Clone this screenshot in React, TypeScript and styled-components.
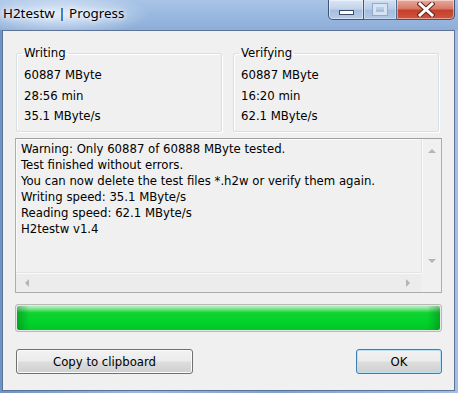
import styled, { createGlobalStyle } from 'styled-components';

const GlobalStyle = createGlobalStyle`
	html, body {
		margin: 0;
		padding: 0;
		background: #f0f0f0;
	}
	* {
		box-sizing: border-box;
	}
`;

const uiFont = `"DejaVu Sans Condensed", "DejaVu Sans", sans-serif`;

interface Stats {
	title: string;
	size: string;
	time: string;
	speed: string;
}

const stats: Stats[] = [
	{ title: 'Writing', size: '60887 MByte', time: '28:56 min', speed: '35.1 MByte/s' },
	{ title: 'Verifying', size: '60887 MByte', time: '16:20 min', speed: '62.1 MByte/s' },
];

const logLines = [
	'Warning: Only 60887 of 60888 MByte tested.',
	'Test finished without errors.',
	'You can now delete the test files *.h2w or verify them again.',
	'Writing speed: 35.1 MByte/s',
	'Reading speed: 62.1 MByte/s',
	'H2testw v1.4',
];

// small grey triangle used by the scroll bar buttons
const Arrow = ({ dir }: { dir: 'up' | 'down' | 'left' | 'right' }) => {
	const pts = {
		up: '0,5 4,1 8,5',
		down: '0,1 4,5 8,1',
		left: '5,0 1,4 5,8',
		right: '1,0 5,4 1,8',
	}[dir];
	const vertical = dir === 'up' || dir === 'down';
	return (
		<svg width={vertical ? 8 : 6} height={vertical ? 6 : 8} viewBox={vertical ? '0 0 8 6' : '0 0 6 8'}>
			<polygon points={pts} fill='#b4b4b4' />
		</svg>
	);
};

const App = () => {
	return (
		<>
			<GlobalStyle />
			<Window>
				<TitleBar>
					<Title>H2testw | Progress</Title>
					<Controls>
						<CaptionButton kind='min'>
							<MinGlyph />
						</CaptionButton>
						<CaptionButton kind='max'>
							<MaxGlyph />
						</CaptionButton>
						<CaptionButton kind='close'>
							<svg width='18' height='15' viewBox='0 0 18 15'>
								<path d='M3 2 L15 13 M15 2 L3 13' stroke='#6a2418' strokeWidth='5' strokeLinecap='square' />
								<path d='M3 2 L15 13 M15 2 L3 13' stroke='#ffffff' strokeWidth='3' strokeLinecap='square' />
							</svg>
						</CaptionButton>
					</Controls>
				</TitleBar>
				<Client>
					<GroupRow>
						{stats.map((s) => (
							<GroupBox key={s.title}>
								<Legend>{s.title}</Legend>
								<StatLine>{s.size}</StatLine>
								<StatLine>{s.time}</StatLine>
								<StatLine>{s.speed}</StatLine>
							</GroupBox>
						))}
					</GroupRow>
					<LogBox>
						<LogText>
							{logLines.map((l) => (
								<div key={l}>{l}</div>
							))}
						</LogText>
						<VScroll>
							<Arrow dir='up' />
							<Arrow dir='down' />
						</VScroll>
						<HScroll>
							<Arrow dir='left' />
							<Arrow dir='right' />
						</HScroll>
						<Corner />
					</LogBox>
					<Progress>
						<ProgressFill style={{ width: '100%' }} />
					</Progress>
					<ButtonRow>
						<Button width={177}>Copy to clipboard</Button>
						<Button width={86} isDefault>
							OK
						</Button>
					</ButtonRow>
				</Client>
			</Window>
		</>
	);
};

export default App;

const Window = styled.div`
	width: 458px;
	height: 393px;
	display: flex;
	flex-direction: column;
	padding: 0 3px 2px 2px;
	background: linear-gradient(90deg, #6f93c4 0%, #9ab8df 30%, #7fa1cf 60%, #a3bfe2 100%);
	overflow: hidden;
`;

const TitleBar = styled.div`
	height: 30px;
	display: flex;
	justify-content: space-between;
	align-items: flex-start;
	margin: 0 -3px 0 -2px;
	background:
		radial-gradient(ellipse 90px 22px at 60px 14px, rgba(230, 240, 252, 0.95), rgba(200, 220, 245, 0) 100%),
		linear-gradient(180deg, #a9c4e6 0%, #9ab8df 50%, #8eaed9 100%);
`;

const Title = styled.div`
	font-family: 'Noto Sans', 'Open Sans', sans-serif;
	font-size: 13.4px;
	line-height: 20px;
	color: #000;
	padding: 3px 0 0 3px;
	text-shadow: 0 0 8px #fff, 0 0 4px #fff;
`;

const Controls = styled.div`
	display: flex;
	margin-right: 3px;
`;

const CaptionButton = styled.div<{ kind: 'min' | 'max' | 'close' }>`
	height: 20px;
	width: ${(p) => (p.kind === 'close' ? 58 : p.kind === 'min' ? 36 : 33)}px;
	display: flex;
	align-items: center;
	justify-content: center;
	border: 1px solid #3e5579;
	border-top: none;
	border-left: ${(p) => (p.kind === 'min' ? '1px solid #3e5579' : 'none')};
	border-radius: ${(p) => (p.kind === 'min' ? '0 0 0 5px' : p.kind === 'close' ? '0 0 5px 0' : '0')};
	box-shadow: inset 0 0 0 1px rgba(255, 255, 255, 0.45);
	background: ${(p) =>
		p.kind === 'close'
			? 'linear-gradient(180deg, #e9a99c 0%, #d77a68 45%, #c4402b 55%, #d2553c 100%)'
			: 'linear-gradient(180deg, #dbe6f4 0%, #c2d3ea 45%, #a7bfdf 55%, #b6cbe6 100%)'};
	opacity: ${(p) => (p.kind === 'max' ? 0.8 : 1)};
`;

const MinGlyph = styled.div`
	width: 15px;
	height: 5px;
	margin-top: 5px;
	background: #fff;
	border: 1px solid #3a4c6a;
`;

const MaxGlyph = styled.div`
	width: 14px;
	height: 11px;
	border: 3px solid #e6eef8;
	outline: 1px solid #8ea4c4;
`;

const Client = styled.div`
	flex: 1;
	display: flex;
	flex-direction: column;
	background: #f0f0f0;
	border: 1px solid #5c7396;
	padding: 14px 12px 15px 12px;
	font-family: ${uiFont};
	font-size: 13px;
	color: #000;
`;

const GroupRow = styled.div`
	display: grid;
	grid-template-columns: 1fr 1fr;
	gap: 11px;
	padding: 0 3px 0 1px;
`;

const GroupBox = styled.fieldset`
	margin: 0;
	height: 87px;
	padding: 4px 8px 5px 7px;
	border: 1px solid #d5dfe5;
	border-radius: 2px;
	box-shadow: inset 1px 1px 0 #fff, 1px 1px 0 #fff;
`;

const Legend = styled.legend`
	padding: 0 2px;
	margin-left: -2px;
	line-height: 16px;
`;

const StatLine = styled.div`
	line-height: 20.5px;
`;

const LogBox = styled.div`
	margin-top: 6px;
	height: 155px;
	display: grid;
	grid-template-columns: 1fr 20px;
	grid-template-rows: 1fr 20px;
	border: 1px solid #abadb3;
	border-top-color: #a0a0a0;
	box-shadow: inset 0 0 0 1px #fafafa;
	background: #f0f0f0;
`;

const LogText = styled.div`
	padding: 2px 5px;
	line-height: 16px;
	white-space: nowrap;
	overflow: hidden;
`;

const VScroll = styled.div`
	display: flex;
	flex-direction: column;
	justify-content: space-between;
	align-items: center;
	padding: 9px 0 8px;
	background: #f0f0f0;
	border-left: 1px solid #e3e3e3;
	box-shadow: inset 1px 0 0 #fafafa;
`;

const HScroll = styled.div`
	display: flex;
	justify-content: space-between;
	align-items: center;
	padding: 0 10px 0 8px;
	background: #ececec;
	border-top: 1px solid #e3e3e3;
	box-shadow: inset 0 1px 0 #fafafa;
`;

const Corner = styled.div`
	background: #f0f0f0;
`;

const Progress = styled.div`
	margin-top: 11px;
	height: 28px;
	border: 1px solid #b8b8b8;
	border-radius: 3px;
	background: #e6e6e6;
	padding: 1px;
`;

const ProgressFill = styled.div`
	height: 100%;
	border-radius: 2px;
	background:
		linear-gradient(90deg, rgba(0, 90, 20, 0.35) 0%, rgba(0, 90, 20, 0) 3%, rgba(0, 90, 20, 0) 97%, rgba(0, 90, 20, 0.35) 100%),
		linear-gradient(180deg, #b6f2bf 0%, #7de58e 12%, #0fd330 28%, #00d22a 70%, #02c427 100%);
`;

const ButtonRow = styled.div`
	margin-top: 17px;
	display: flex;
	justify-content: space-between;
	padding-left: 1px;
`;

const Button = styled.button<{ width: number; isDefault?: boolean }>`
	width: ${(p) => p.width}px;
	height: 25px;
	padding: 0;
	font-family: ${uiFont};
	font-size: 13px;
	color: #000;
	border-radius: 3px;
	border: 1px solid ${(p) => (p.isDefault ? '#3c7fb1' : '#707070')};
	box-shadow: inset 0 0 0 1px ${(p) => (p.isDefault ? '#b6e3f7' : '#fbfbfb')};
	background: linear-gradient(180deg, #f2f2f2 0%, #ebebeb 48%, #dddddd 52%, #cfcfcf 100%);
`;
